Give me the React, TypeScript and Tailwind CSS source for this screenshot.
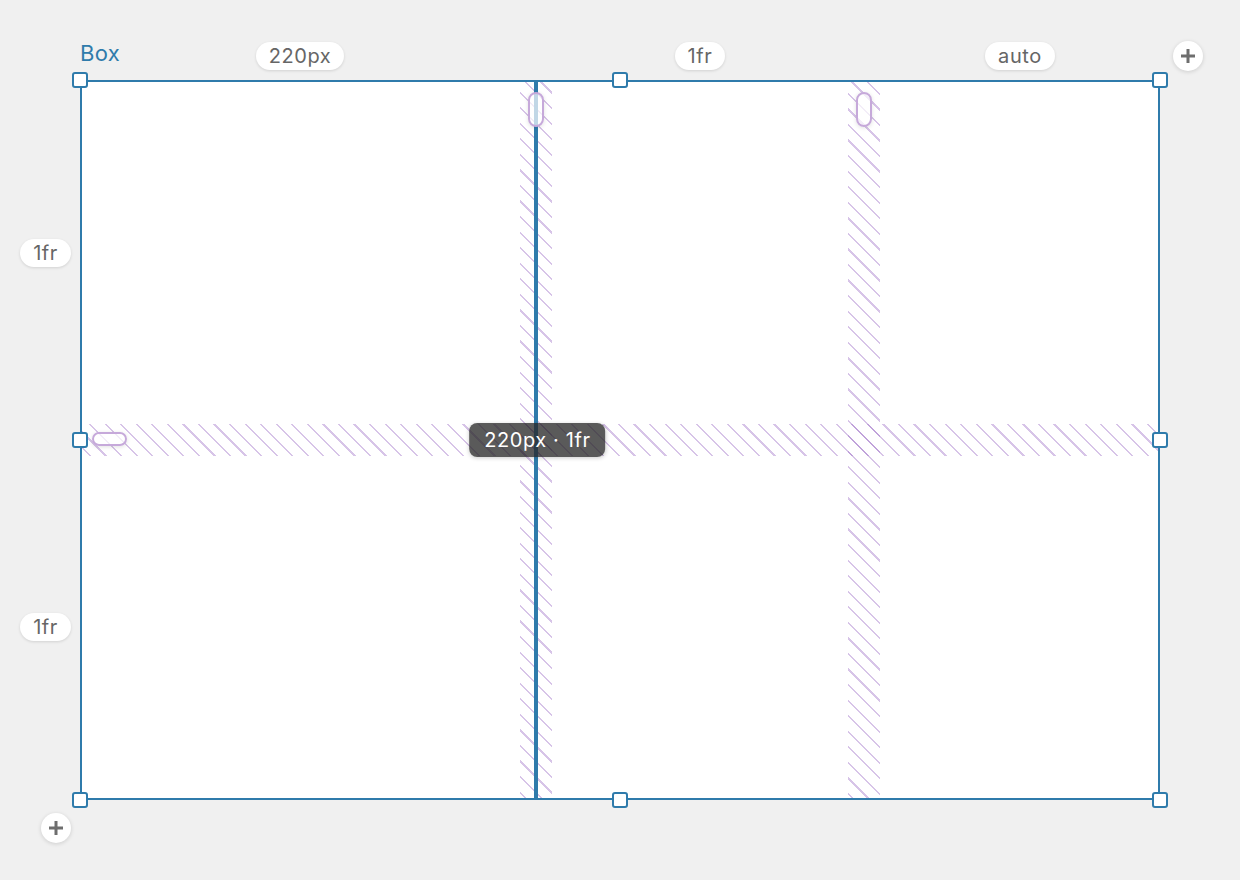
import React from "react";

// diagonal gap hatching, fixed to the viewport so crossing strips line up
const hatch =
  "bg-[repeating-linear-gradient(45deg,rgba(160,115,200,0.42)_0_1.6px,transparent_1.6px_11px)] bg-fixed";

const SizeTag = ({ children }: { children: React.ReactNode }) => (
  <span className="flex h-[28px] items-center rounded-full bg-white px-[13px] text-[20px] leading-none tracking-[0.6px] text-[#666] shadow-[0_1px_3px_rgba(0,0,0,0.13)]">
    {children}
  </span>
);

const AddTrack = () => (
  <button className="flex h-[30px] w-[30px] items-center justify-center rounded-full bg-white shadow-[0_1px_4px_rgba(0,0,0,0.15)]">
    <svg width="16" height="16" viewBox="0 0 16 16">
      <path d="M8 1v14M1 8h14" stroke="#6e6e6e" strokeWidth="3" />
    </svg>
  </button>
);

const Handle = ({ className }: { className: string }) => (
  <span
    className={`absolute h-4 w-4 -translate-x-1/2 -translate-y-1/2 rounded-[3px] border-2 border-[#2f7bab] bg-white ${className}`}
  />
);

const GapGrip = ({ className }: { className: string }) => (
  <span
    className={`rounded-full border-2 border-[#c6a9da] bg-white/70 shadow-[0_1px_4px_rgba(0,0,0,0.12)] ${className}`}
  />
);

export default function App() {
  return (
    <div className="grid h-[880px] w-[1240px] grid-cols-[80px_1080px_80px] grid-rows-[80px_720px_80px] bg-[#f0f0f0] font-[Inter,sans-serif]">
      <div />

      {/* column sizes */}
      <div className="grid grid-cols-[2px_438px_32px_296px_32px_278px_2px] items-end pb-[10px]">
        <div className="relative col-span-2 flex h-full items-end justify-center">
          <span className="absolute bottom-[5px] left-0 text-[22px] leading-[24px] tracking-[0.3px] text-[#2f7bab]">
            Box
          </span>
          <SizeTag>220px</SizeTag>
        </div>
        <div />
        <div className="flex justify-center">
          <SizeTag>1fr</SizeTag>
        </div>
        <div />
        <div className="col-span-2 flex justify-center">
          <SizeTag>auto</SizeTag>
        </div>
      </div>

      <div className="pl-[13px] pt-[41px]">
        <AddTrack />
      </div>

      {/* row sizes */}
      <div className="grid grid-rows-[2px_342px_32px_342px_2px] justify-end pr-[9px]">
        <div />
        <div className="flex items-center">
          <SizeTag>1fr</SizeTag>
        </div>
        <div />
        <div className="flex items-center">
          <SizeTag>1fr</SizeTag>
        </div>
      </div>

      <div className="relative">
        <div className="grid h-full w-full grid-cols-[438px_32px_296px_32px_278px] grid-rows-[342px_32px_342px] border-2 border-[#2f7bab] bg-white">
          <div className={`col-span-5 col-start-1 row-start-2 flex items-center pl-[10px] ${hatch}`}>
            <GapGrip className="mb-[2px] h-[14px] w-[35px]" />
          </div>

          <div className={`relative col-start-2 row-span-3 row-start-1 flex justify-center ${hatch}`}>
            <span className="absolute inset-y-0 left-1/2 w-[4px] -translate-x-1/2 bg-[#2f7bab]" />
            <GapGrip className="relative mt-[10px] h-[35px] w-[16px]" />
            <span className="absolute left-1/2 top-1/2 z-10 -translate-x-[49%] -translate-y-1/2 whitespace-nowrap rounded-lg bg-[rgba(40,40,40,0.77)] px-[15px] py-[6px] text-[20px] leading-[22px] tracking-[0.6px] text-white shadow-[0_1px_4px_rgba(0,0,0,0.2)]">
              220px · 1fr
            </span>
          </div>

          <div className={`col-start-4 row-span-3 row-start-1 flex justify-center ${hatch}`}>
            <GapGrip className="mt-[10px] h-[35px] w-[16px]" />
          </div>
        </div>

        <Handle className="left-0 top-0" />
        <Handle className="left-1/2 top-0" />
        <Handle className="left-full top-0" />
        <Handle className="left-0 top-1/2" />
        <Handle className="left-full top-1/2" />
        <Handle className="left-0 top-full" />
        <Handle className="left-1/2 top-full" />
        <Handle className="left-full top-full" />
      </div>

      <div />

      <div className="pl-[41px] pt-[13px]">
        <AddTrack />
      </div>
    </div>
  );
}
